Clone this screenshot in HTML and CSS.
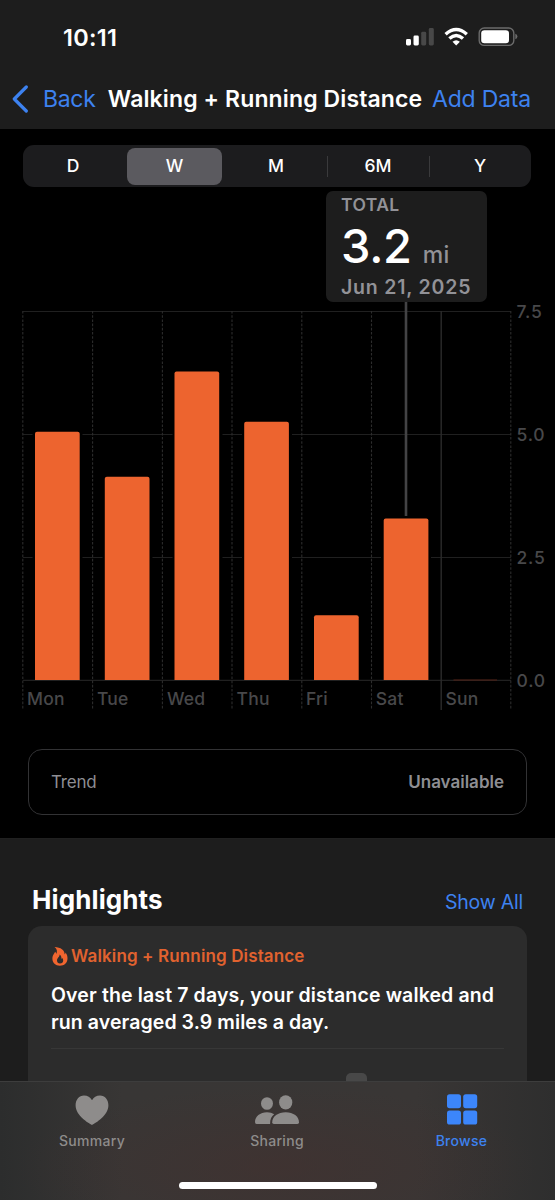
FILE: index.html
```html
<!DOCTYPE html>
<html lang="en">
<head>
<meta charset="utf-8">
<title>Walking + Running Distance</title>
<link rel="stylesheet" href="styles.css">
</head>
<body>
<div class="phone">
  <header class="top">
    <div class="status">
      <span class="time">10:11</span>
      <svg class="status-icons" width="112" height="20" viewBox="0 0 112 20">
        <rect x="0" y="12" width="5" height="6.5" rx="1.4" fill="#fff"/>
        <rect x="7.5" y="8.5" width="5.3" height="10" rx="1.4" fill="#fff"/>
        <rect x="15.2" y="4.8" width="5" height="13.7" rx="1.4" fill="#484848"/>
        <rect x="22.8" y="1" width="5" height="17.5" rx="1.4" fill="#484848"/>
        <g fill="none" stroke="#fff" stroke-width="3.4">
          <path d="M39.6 7.2Q50.2-2.2 60.8 7.2"/>
          <path d="M43.4 11.6Q50.2 5.4 57 11.6"/>
        </g>
        <path d="M46.5 14.8Q50.2 11.6 53.9 14.8L50.2 18.5Z" fill="#fff"/>
        <rect x="73.2" y="1" width="34.6" height="17.4" rx="5" fill="none" stroke="#6b6b6b" stroke-width="1.4"/>
        <rect x="75.2" y="3.2" width="27.8" height="13" rx="3.2" fill="#fff"/>
        <path d="M109.3 6.7Q111.4 7.4 111.4 9.5T109.3 12.3Z" fill="#6b6b6b"/>
      </svg>
    </div>
    <nav class="nav">
      <svg class="chevron" width="17" height="28" viewBox="0 0 17 28"><path d="M14.3 2L2.3 14 14.3 26" fill="none" stroke="#3d82f0" stroke-width="3.2" stroke-linecap="round" stroke-linejoin="round"/></svg>
      <span class="back">Back</span>
      <h1 class="title">Walking + Running Distance</h1>
      <span class="add">Add Data</span>
    </nav>
  </header>

  <main>
    <div class="segments">
      <span class="segment">D</span>
      <span class="segment selected">W</span>
      <span class="segment">M</span>
      <span class="segment divided">6M</span>
      <span class="segment divided">Y</span>
    </div>

    <section class="chart">
      <svg class="plot" width="555" height="420" viewBox="0 300 555 420">
        <g class="rule">
          <path d="M23 311.5H511M23 434.5H511M23 557.5H511M23 680.3H511"/>
        </g>
        <g class="dash">
          <path d="M22.8 311V710M92.6 311V710M162.4 311V710M232 311V710M301.8 311V710M371.5 311V710M510.8 311V710"/>
        </g>
        <path class="week" d="M441.2 311V710"/>
        <g class="halo">
          <path d="M32.5 430h50v248h-50zM172.5 370h50v308h-50zM242 420h50v258h-50zM102.5 475h50v203h-50zM381 516h50v162h-50z"/>
        </g>
        <g class="bars">
          <path d="M35 680V433.8q0-2 2-2h40.7q2 0 2 2V680z"/>
          <path d="M104.8 680V478.8q0-2 2-2h40.7q2 0 2 2V680z"/>
          <path d="M174.5 680V373.5q0-2 2-2h40.7q2 0 2 2V680z"/>
          <path d="M244.2 680V423.8q0-2 2-2h40.7q2 0 2 2V680z"/>
          <path d="M314 680V617.2q0-2 2-2h40.7q2 0 2 2V680z"/>
          <path d="M383.7 680V520.5q0-2 2-2h40.7q2 0 2 2V680z"/>
        </g>
        <path d="M453.5 680H497" stroke="#542014" stroke-width="1.2"/>
        <path d="M406 301V516" stroke="#434345" stroke-width="2.6"/>
        <g class="days">
          <text x="27" y="705.3">Mon</text>
          <text x="97" y="705.3">Tue</text>
          <text x="167" y="705.3">Wed</text>
          <text x="236.6" y="705.3">Thu</text>
          <text x="306" y="705.3">Fri</text>
          <text x="375.8" y="705.3">Sat</text>
          <text x="445.5" y="705.3">Sun</text>
        </g>
        <g class="scale">
          <text x="516.5" y="318.2">7.5</text>
          <text x="516.5" y="441.2">5.0</text>
          <text x="516.5" y="564">2.5</text>
          <text x="516.5" y="687">0.0</text>
        </g>
      </svg>
      <div class="callout">
        <span class="callout-label">TOTAL</span>
        <span class="callout-value">3.2<span class="unit">mi</span></span>
        <span class="callout-date">Jun 21, 2025</span>
      </div>
    </section>

    <div class="trend"><span class="trend-name">Trend</span><span class="trend-state">Unavailable</span></div>

    <section class="highlights">
      <div class="heading"><h2 class="heading-title">Highlights</h2><span class="show-all">Show All</span></div>
      <article class="card">
        <div class="topic">
          <svg width="17" height="19" viewBox="-1 0 17 19"><path fill-rule="evenodd" d="M2.5 0C8.8.2 12.7 3.3 12.6 7.2C13.3 6.8 13.5 6 13.5 5.4C15 7.2 15.5 9.2 15.5 11.2C15.5 16 12.2 18.7 7.8 18.7C3.5 18.7.4 15.8.4 11.8C.4 8.2 2.2 7.1 3.1 4.8C3.8 5.3 4.2 6.1 4.2 7C5.6 4.8 5.1 1.7 2.5 0ZM7.5 7.6C8 10 5 10.8 5 13.4C5 15.2 6.3 16.4 8 16.4C9.9 16.4 11.2 15.1 11.2 13.4C11.2 12.3 10.8 11.5 10.2 10.9L9.4 12C9.6 10.2 9 8.5 7.5 7.6Z" fill="#f0652f"/></svg>
          <span class="topic-name">Walking + Running Distance</span>
        </div>
        <p class="summary"><span class="line first">Over the last 7 days, your distance walked and</span><br><span class="line second">run averaged 3.9 miles a day.</span></p>
        <div class="mini"><i class="mini-bar"></i></div>
      </article>
    </section>
  </main>

  <footer class="tabs">
    <div class="tab">
      <svg width="34" height="32" viewBox="0 0 34 32"><path d="M17 31C13.5 29 .6 21.5 .6 11.2C.6 5.5 4.2 1.4 9 1.4C12.6 1.4 15.4 3.2 17 6.2C18.6 3.2 21.4 1.4 25 1.4C29.8 1.4 33.4 5.5 33.4 11.2C33.4 21.5 20.5 29 17 31Z" fill="#8e8c8b"/></svg>
      <span class="tab-name">Summary</span>
    </div>
    <div class="tab">
      <svg width="44" height="32" viewBox="0 0 44 32" fill="#8e8c8b"><ellipse cx="12" cy="9.5" rx="6" ry="6.3"/><path d="M0 28C0 22.5 5 18.2 12 18.2C15 18.2 17.3 18.9 19.2 20.2C16.5 22.2 15 25.2 15.1 30H1.5Q0 30 0 28Z"/><ellipse cx="30.7" cy="8.4" rx="6.6" ry="7.2"/><path d="M17.2 28.2C17.2 22.5 23 18.2 30.7 18.2S44 22.5 44 28.2Q44 30 42.4 30H18.8Q17.2 30 17.2 28.2Z"/></svg>
      <span class="tab-name">Sharing</span>
    </div>
    <div class="tab active">
      <svg width="32" height="32" viewBox="0 0 32 32" fill="#3c86fb"><rect x="1" y="0.2" width="14" height="14" rx="2.6"/><rect x="17.2" y="0.2" width="14" height="14" rx="2.6"/><rect x="1" y="16.5" width="14" height="14" rx="2.6"/><rect x="17.2" y="16.5" width="14" height="14" rx="2.6"/></svg>
      <span class="tab-name">Browse</span>
    </div>
    <i class="home"></i>
  </footer>
</div>
</body>
</html>
```
FILE: styles.css
```css
* { box-sizing: border-box; }
body { margin: 0; background: #000; color: #fff; font-family: Inter, "Liberation Sans", sans-serif; }
h1, h2, p { margin: 0; }
svg { display: block; flex: none; }
span { white-space: nowrap; }
.phone { width: 555px; height: 1200px; position: relative; overflow: hidden; background: #000; }

.top { height: 129px; background: #1d1d1d; }
.status { height: 70px; padding: 4px 37px 0 63px; display: flex; align-items: center; justify-content: space-between; }
.time { font-size: 23.5px; font-weight: 600; letter-spacing: 0.3px; }
.nav { height: 57px; padding: 0 24px 0 12px; display: flex; align-items: center; }
.back, .add { font-size: 23px; color: #3d82f0; }
.back { margin-left: 14px; width: 65px; letter-spacing: -0.3px; }
.title { width: 325px; font-size: 23px; font-weight: 600; letter-spacing: 0.12px; white-space: nowrap; }
.add { letter-spacing: -0.2px; }

.segments { height: 42px; margin: 16px 24px 0 23px; padding: 2.5px 0; background: #1c1c1e; border-radius: 11px; display: grid; grid-template-columns: 100px repeat(4, 102px); }
.segment { display: flex; align-items: center; justify-content: center; position: relative; padding-bottom: 1px; font-size: 17.5px; font-weight: 500; }
.selected { background: #5b5a5f; border-radius: 8px; margin: 0 3px 0 4px; }
.divided::before { content: ""; position: absolute; left: 0; top: 8px; width: 1px; height: 21px; background: #3a3a3c; }

.chart { position: relative; height: 533px; padding-top: 113px; }
.rule path { stroke: #202020; stroke-width: 1.2; }
.dash path { stroke: #2c2c2c; stroke-width: 1.1; stroke-dasharray: 2.6 1.6; }
.week { stroke: #2b2b2b; stroke-width: 1.4; }
.halo path { fill: #000; }
.bars path { fill: #ed642f; }
.days, .scale { fill: #48484a; font-size: 17.5px; font-weight: 500; letter-spacing: 0.2px; }
.scale { letter-spacing: 0.8px; }
.callout { position: absolute; left: 326px; top: 4px; width: 161px; height: 111px; padding: 3px 15px 0; border-radius: 7px; background: #1d1d1d; display: flex; flex-direction: column; font-weight: 600; color: #929297; }
.callout-label { font-size: 17.5px; line-height: 22px; letter-spacing: 0.4px; }
.callout-value { font-size: 47px; line-height: 59px; font-weight: 500; color: #fff; letter-spacing: -0.3px; }
.unit { font-size: 23px; line-height: 1; font-weight: 500; color: #929297; margin-left: 11px; letter-spacing: 0.3px; }
.callout-date { font-size: 19.5px; line-height: 24px; letter-spacing: 0.8px; }

.trend { height: 66px; margin: 29px 28px 0; padding: 0 22px; border: 1.5px solid #323234; border-radius: 14px; display: flex; align-items: center; justify-content: space-between; font-size: 17px; color: #8e8e93; }
.trend-name { letter-spacing: -0.2px; }
.trend-state { font-weight: 600; }

.highlights { margin-top: 23px; height: 363px; background: #1d1d1d; padding: 39px 28px 0; border-top: 1px solid #202020; }
.heading { height: 48px; padding: 0 4px; display: flex; align-items: center; justify-content: space-between; }
.heading-title { font-size: 26px; font-weight: 700; letter-spacing: 0.1px; padding-bottom: 5px; }
.show-all { font-size: 19.5px; color: #3d82f0; letter-spacing: -0.2px; }
.card { height: 275px; padding: 20px 23px 0; border-radius: 14px; background: #2c2c2c; }
.topic { height: 20px; display: flex; align-items: center; gap: 3px; }
.topic-name { font-size: 17px; font-weight: 600; color: #e1622f; letter-spacing: 0.13px; }
.summary { margin-top: 16px; font-size: 19.5px; line-height: 27px; font-weight: 600; }
.first { letter-spacing: 0.13px; }
.second { letter-spacing: 0.08px; }
.mini { margin-top: 12px; border-top: 1px solid #373737; height: 60px; padding: 24px 0 0 295px; }
.mini-bar { display: block; width: 21px; height: 30px; border-radius: 5px 5px 0 0; background: #484848; }

.tabs { position: absolute; left: 0; bottom: 0; width: 555px; height: 119px; padding-top: 12px; display: grid; grid-template-columns: repeat(3, 185px); border-top: 1px solid #3d3d3d; background: radial-gradient(ellipse 260px 80px at 50% 72%, rgba(68,48,46,.55), rgba(68,48,46,0)), linear-gradient(90deg, #2c2d2d, #383635 22%, #393635 75%, #2e2e2e); }
.tab { height: 60px; padding-right: 1px; display: flex; flex-direction: column; align-items: center; gap: 6px; color: #8e8c8b; }
.tab-name { font-size: 14px; line-height: 18px; font-weight: 500; letter-spacing: 0.3px; }
.active { padding-right: 2px; color: #3d82f0; }
.home { position: absolute; left: 179px; top: 99.5px; width: 198px; height: 7px; border-radius: 4px; background: #fff; }
```
